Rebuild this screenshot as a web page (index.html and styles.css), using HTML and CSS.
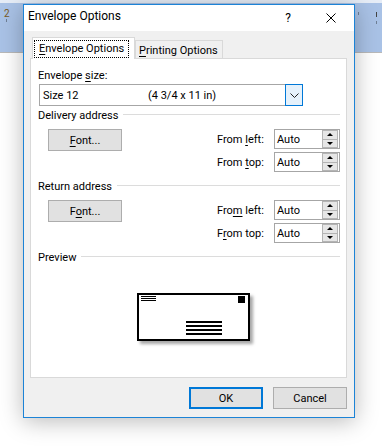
FILE: index.html
```html
<!DOCTYPE html>
<html lang="en">
<head>
    <meta charset="UTF-8">
    <title>Envelope Options</title>
    <link rel="stylesheet" href="styles.css">
</head>
<body>

<!-- Word window behind the dialog -->
<div class="desk">
    <div class="ribbon-top"></div>
    <div class="ruler">
        <span class="ruler-num">2</span>
        <span class="tick tick-a"></span>
        <span class="tick tick-b"></span>
        <span class="tick tick-c"></span>
        <span class="tick tick-d"></span>
    </div>
</div>

<!-- Envelope Options dialog -->
<div class="dialog">
    <div class="titlebar">
        <span class="title">Envelope Options</span>
        <span class="cap-btn help">?</span>
        <span class="cap-btn close">
            <svg width="10" height="10" viewBox="0 0 10 10"><path d="M0.5 0.5 L9.5 9.5 M9.5 0.5 L0.5 9.5" stroke="#000" stroke-width="1" fill="none"/></svg>
        </span>
    </div>

    <div class="tabs">
        <div class="tab active"><span class="focus"><u>E</u>nvelope Options</span></div>
        <div class="tab"><u>P</u>rinting Options</div>
    </div>

    <div class="panel">
        <div class="field-label">Envelope <u>s</u>ize:</div>
        <div class="combo">
            <span class="combo-name">Size 12</span>
            <span class="combo-dim">(4 3/4 x 11 in)</span>
            <span class="combo-drop">
                <svg width="9" height="5" viewBox="0 0 9 5"><path d="M0.5 0.5 L4.5 4.5 L8.5 0.5" stroke="#222" stroke-width="1" fill="none"/></svg>
            </span>
        </div>

        <!-- Delivery address -->
        <div class="group-head first"><span>Delivery address</span><i></i></div>
        <div class="group">
            <button class="btn font-btn" type="button"><u>F</u>ont...</button>
            <div class="positions">
                <span>From <u>l</u>eft:</span>
                <div class="spin"><span class="spin-val">Auto</span><span class="spin-btns"><b class="up"></b><b class="down"></b></span></div>
                <span>From <u>t</u>op:</span>
                <div class="spin"><span class="spin-val">Auto</span><span class="spin-btns"><b class="up"></b><b class="down"></b></span></div>
            </div>
        </div>

        <!-- Return address -->
        <div class="group-head"><span>Return address</span><i></i></div>
        <div class="group">
            <button class="btn font-btn" type="button">F<u>o</u>nt...</button>
            <div class="positions">
                <span>Fro<u>m</u> left:</span>
                <div class="spin"><span class="spin-val">Auto</span><span class="spin-btns"><b class="up"></b><b class="down"></b></span></div>
                <span>F<u>r</u>om top:</span>
                <div class="spin"><span class="spin-val">Auto</span><span class="spin-btns"><b class="up"></b><b class="down"></b></span></div>
            </div>
        </div>

        <!-- Preview -->
        <div class="group-head"><span>Preview</span><i></i></div>
        <div class="preview">
            <div class="envelope">
                <svg width="109" height="44" viewBox="0 0 109 44">
                    <path d="M2 1.5 H17 M2 3.5 H17 M2 5.5 H17" stroke="#000" stroke-width="1"/>
                    <rect x="99" y="1" width="7" height="7" fill="#000"/>
                    <path d="M47 27 H83 M47 31 H83 M47 35 H83 M47 39 H83" stroke="#000" stroke-width="2"/>
                </svg>
            </div>
        </div>
    </div>

    <div class="actions">
        <button class="btn ok" type="button">OK</button>
        <button class="btn" type="button">Cancel</button>
    </div>
</div>

</body>
</html>
```

FILE: styles.css
```css
body {
    margin: 0;
    width: 382px;
    height: 446px;
    overflow: hidden;
    position: relative;
    background: #fff;
    font-family: Roboto, "Segoe UI", sans-serif;
    font-size: 11px;
    color: #000;
}

u {
    text-decoration-thickness: 1px;
    text-underline-offset: 2px;
}

/* ---- Word window behind ---- */
.ribbon-top {
    height: 3px;
    background: #e6edf7;
}

.ruler {
    height: 49px;
    background: #a9c2e6;
    border-bottom: 1px solid #b9b9b9;
    position: relative;
}

.ruler-num {
    position: absolute;
    left: 4px;
    top: 5px;
    font-size: 10px;
    line-height: 12px;
    color: #7a5a1e;
}

.tick {
    position: absolute;
    width: 1px;
    background: #6f7f96;
}

.tick-a { left: 6px; top: 16px; height: 3px; }
.tick-b { left: 358px; top: 9px; height: 3px; }
.tick-c { left: 376px; top: 9px; height: 5px; background: #444; }
.tick-d { left: 376px; top: 18px; height: 3px; }

/* ---- dialog ---- */
.dialog {
    position: absolute;
    left: 23px;
    top: 4px;
    width: 330px;
    height: 412px;
    border: 1px solid #1c83d6;
    background: #f0f0f0;
    box-shadow: 0 3px 22px rgba(0, 0, 0, 0.28);
    display: flex;
    flex-direction: column;
}

.titlebar {
    height: 26px;
    background: #fff;
    display: flex;
    align-items: flex-start;
}

.title {
    flex: 1;
    padding: 4px 0 0 4px;
    font-size: 12px;
    line-height: 15px;
}

.cap-btn {
    display: flex;
    align-items: center;
    justify-content: center;
    height: 26px;
}

.help {
    width: 40px;
    font-size: 12px;
}

.close {
    width: 46px;
}

/* ---- tabs ---- */
.tabs {
    height: 27px;
    padding-left: 8px;
    display: flex;
    align-items: flex-end;
    position: relative;
    z-index: 1;
}

.tab {
    box-sizing: border-box;
    height: 18px;
    width: 88px;
    padding: 2px 0 0 3px;
    border: 1px solid #d9d9d9;
    border-bottom: none;
    background: #f0f0f0;
    line-height: 15px;
    white-space: nowrap;
}

.tab.active {
    height: 22px;
    width: 103px;
    margin-bottom: -1px;
    padding: 2px 0 0 1px;
    background: #fff;
}

.focus {
    display: inline-block;
    box-sizing: border-box;
    width: 95px;
    height: 18px;
    border: 1px dotted #000;
    padding: 1px 0 0 4px;
    line-height: 14px;
}

/* ---- tab panel ---- */
.panel {
    box-sizing: border-box;
    margin-left: 6px;
    width: 317px;
    height: 320px;
    padding: 9px 6px 0 7px;
    background: #fff;
    border: 1px solid #d9d9d9;
}

.field-label {
    line-height: 15px;
}

.combo {
    box-sizing: border-box;
    margin: 1px 0 0 1px;
    width: 264px;
    height: 22px;
    border: 1px solid #a6a6a6;
    display: flex;
    align-items: center;
    padding-left: 3px;
}

.combo-name {
    width: 105px;
}

.combo-dim {
    flex: 1;
}

.combo-drop {
    box-sizing: border-box;
    width: 18px;
    height: 22px;
    margin: -1px -1px -1px 0;
    border: 1px solid #0078d7;
    background: #e5f1fb;
    display: flex;
    align-items: center;
    justify-content: center;
}

.group-head {
    display: flex;
    align-items: flex-start;
    gap: 5px;
    line-height: 15px;
    margin-top: 7px;
}

.group-head.first {
    margin-top: 2px;
}

.group-head i {
    flex: 1;
    height: 1px;
    margin-top: 6px;
    background: #dcdcdc;
}

.group {
    display: flex;
    align-items: flex-start;
    margin-top: 6px;
}

.btn {
    box-sizing: border-box;
    width: 74px;
    height: 22px;
    padding: 0;
    border: 1px solid #adadad;
    background: #e1e1e1;
    font-family: inherit;
    font-size: 11px;
    color: #000;
}

.font-btn {
    margin-left: 10px;
}

.positions {
    margin-left: auto;
    display: grid;
    grid-template-columns: 57px 66px;
    row-gap: 3px;
    align-items: center;
}

.spin {
    box-sizing: border-box;
    height: 20px;
    border: 1px solid #a6a6a6;
    display: flex;
    align-items: center;
}

.spin-val {
    flex: 1;
    padding-left: 2px;
}

.spin-btns {
    width: 16px;
    height: 18px;
    display: flex;
    flex-direction: column;
    padding-right: 1px;
}

.spin-btns b {
    flex: 1;
    box-sizing: border-box;
    background: #e6e6e6;
    border: 1px solid #b4b4b4;
    display: flex;
    align-items: center;
    justify-content: center;
}

.spin-btns b.down {
    border-top: none;
}

.spin-btns b::after {
    content: "";
    border-left: 3px solid transparent;
    border-right: 3px solid transparent;
}

.spin-btns b.up::after {
    border-bottom: 3px solid #000;
}

.spin-btns b.down::after {
    border-top: 3px solid #000;
}

.preview {
    padding: 28px 0 0 99px;
}

.envelope {
    width: 109px;
    height: 44px;
    border: 2px solid #000;
    background: #fff;
    box-shadow: 3px 3px 3px rgba(0, 0, 0, 0.35);
}

.envelope svg {
    display: block;
}

/* ---- bottom buttons ---- */
.actions {
    display: flex;
    justify-content: flex-end;
    gap: 10px;
    padding: 9px 7px 0 0;
}

.btn.ok {
    border: 2px solid #0078d7;
}
```
